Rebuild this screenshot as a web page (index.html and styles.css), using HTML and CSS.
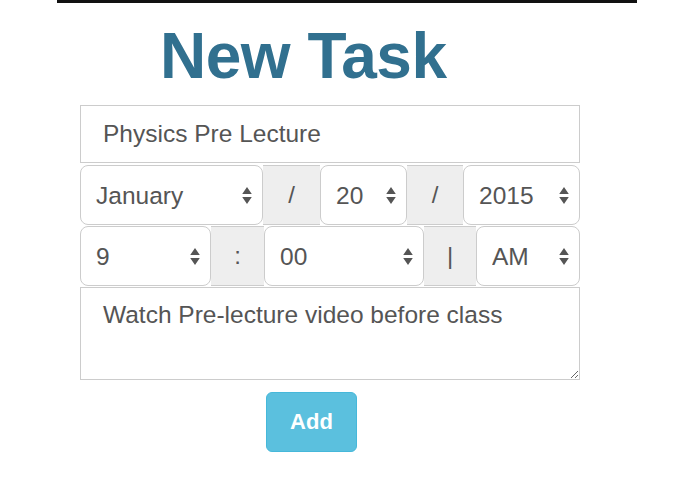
FILE: index.html
```html
<!DOCTYPE html>
<html>
<head>
<meta charset="utf-8">
<link rel="stylesheet" href="styles.css">
</head>
<body>
<div class="topbar"></div>
<form class="task-form">
  <h1 class="title">New Task</h1>
  <input class="field name-field" type="text" value="Physics Pre Lecture">
  <div class="row">
    <div class="sel w-month"><select><option>January</option></select><svg class="arrows" viewBox="0 0 9 16"><path d="M0 6.5L4.5 0L9 6.5Z M0 9.5H9L4.5 16Z"/></svg></div>
    <span class="addon w57">/</span>
    <div class="sel w-day"><select><option>20</option></select><svg class="arrows" viewBox="0 0 9 16"><path d="M0 6.5L4.5 0L9 6.5Z M0 9.5H9L4.5 16Z"/></svg></div>
    <span class="addon w56">/</span>
    <div class="sel w-year"><select><option>2015</option></select><svg class="arrows" viewBox="0 0 9 16"><path d="M0 6.5L4.5 0L9 6.5Z M0 9.5H9L4.5 16Z"/></svg></div>
  </div>
  <div class="row">
    <div class="sel w-hour"><select><option>9</option></select><svg class="arrows" viewBox="0 0 9 16"><path d="M0 6.5L4.5 0L9 6.5Z M0 9.5H9L4.5 16Z"/></svg></div>
    <span class="addon w53">:</span>
    <div class="sel w-min"><select><option>00</option></select><svg class="arrows" viewBox="0 0 9 16"><path d="M0 6.5L4.5 0L9 6.5Z M0 9.5H9L4.5 16Z"/></svg></div>
    <span class="addon w52">|</span>
    <div class="sel w-ampm"><select><option>AM</option></select><svg class="arrows" viewBox="0 0 9 16"><path d="M0 6.5L4.5 0L9 6.5Z M0 9.5H9L4.5 16Z"/></svg></div>
  </div>
  <textarea class="field notes">Watch Pre-lecture video before class</textarea>
  <button class="add-btn" type="button">Add</button>
</form>
</body>
</html>
```
FILE: styles.css
```css
html, body {
  margin: 0;
  padding: 0;
  background: #fff;
  font-family: "Liberation Sans", Arial, Helvetica, sans-serif;
}
.topbar {
  margin-left: 57px;
  width: 580px;
  height: 3px;
  background: #111;
}
.task-form {
  width: 500px;
  margin-left: 80px;
  display: flex;
  flex-direction: column;
  align-items: flex-start;
}
.title {
  margin: 18px 0 14px 80px;
  font-size: 64px;
  line-height: 70px;
  font-weight: bold;
  color: #31708f;
  letter-spacing: -0.5px;
}
.field {
  box-sizing: border-box;
  width: 500px;
  border: 1px solid #ccc;
  border-radius: 0;
  font-family: inherit;
  font-size: 24.5px;
  color: #555;
  background: #fff;
  outline: none;
  margin: 0;
}
.name-field {
  height: 58px;
  padding: 0 22px;
  margin-bottom: 2px;
}
.row {
  display: flex;
  width: 500px;
  height: 60px;
  margin-bottom: 1px;
}
.sel {
  position: relative;
  height: 60px;
  flex: none;
}
.sel select {
  -webkit-appearance: none;
  appearance: none;
  box-sizing: border-box;
  width: 100%;
  height: 100%;
  border: 1px solid #ccc;
  border-radius: 8px;
  background: #fff;
  color: #555;
  font-family: inherit;
  font-size: 24.5px;
  padding: 0 15px;
  margin: 0;
  outline: none;
}
.arrows {
  position: absolute;
  right: 11px;
  top: 22px;
  width: 10px;
  height: 17px;
  fill: #555;
  pointer-events: none;
}
.addon {
  box-sizing: border-box;
  height: 60px;
  flex: none;
  display: flex;
  align-items: center;
  justify-content: center;
  background: #eee;
  border-top: 1px solid #ccc;
  border-bottom: 1px solid #ccc;
  color: #555;
  font-size: 24px;
}
.w-month { width: 183px; }
.w-day { width: 87px; }
.w-year { width: 117px; }
.w-hour { width: 131px; }
.w-min { width: 160px; }
.w-ampm { width: 104px; }
.w57 { width: 57px; }
.w56 { width: 56px; }
.w53 { width: 53px; }
.w52 { width: 52px; }
.notes {
  height: 93px;
  padding: 10px 22px;
  line-height: 34px;
  resize: vertical;
}
.add-btn {
  margin: 12px 0 0 186px;
  width: 91px;
  height: 60px;
  border: 1px solid #46b8da;
  border-radius: 6px;
  background: #5bc0de;
  color: #fff;
  font-family: inherit;
  font-size: 22px;
  font-weight: bold;
  padding: 0;
}
```
